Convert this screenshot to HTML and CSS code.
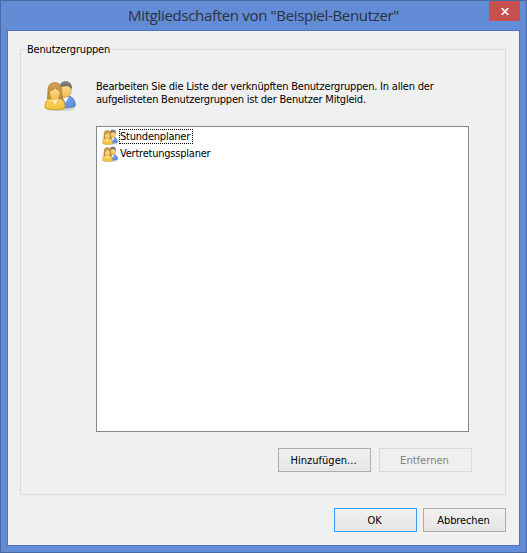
FILE: index.html
```html
<!DOCTYPE html>
<html lang="de">
<head>
<meta charset="utf-8">
<title>Mitgliedschaften</title>
<link rel="stylesheet" href="styles.css">
</head>
<body>
<svg class="defs" width="0" height="0" aria-hidden="true">
  <defs>
    <linearGradient id="gold" x1="0" y1="0" x2="0" y2="1"><stop offset="0" stop-color="#fbd361"/><stop offset="1" stop-color="#f3c23a"/></linearGradient>
    <linearGradient id="blue" x1="0" y1="0" x2="1" y2="1"><stop offset="0" stop-color="#85adef"/><stop offset="1" stop-color="#5585d8"/></linearGradient>
    <linearGradient id="hair" x1="0" y1="0" x2="0" y2="1"><stop offset="0" stop-color="#cf9d52"/><stop offset="1" stop-color="#bd8536"/></linearGradient>
    <linearGradient id="dark" x1="0" y1="0" x2="0" y2="1"><stop offset="0" stop-color="#8c8c8c"/><stop offset="1" stop-color="#5c5c5c"/></linearGradient>
    <linearGradient id="skin" x1="0" y1="0" x2="0" y2="1"><stop offset="0" stop-color="#ffe7a0"/><stop offset="1" stop-color="#efba4c"/></linearGradient>
    <symbol id="users" viewBox="0 1 32 30" preserveAspectRatio="none">
      <ellipse cx="17" cy="29.300" rx="14" ry="1.700" fill="#999" opacity=".3"/>
      <path d="M15 28V18.500c2-1.500 4-2 7-2 6 0 9.300 3 9.300 9.500C31 27.500 25 28 21 28Z" fill="url(#blue)" stroke="#4167a7" stroke-width=".7"/>
      <path d="m18.500 17 3 6 3.500-6Z" fill="#fff"/>
      <ellipse cx="21.500" cy="10.500" rx="5.700" ry="7.500" fill="url(#skin)" stroke="#b68434" stroke-width=".5"/>
      <path d="M15.500 8C16 .2 27.500-.2 28 8.500L27 10c-.5-2-1.500-3-4-3-3 0-5 0-7.500 2Z" fill="url(#dark)"/>
      <path d="M3 19C4.200 16 3.500 12 4 9c1-7.500 12.500-7.500 13.500 0 .5 3 0 7 1.500 10l-4 3H7Z" fill="url(#hair)" stroke="#a37331" stroke-width=".5"/>
      <path d="M1 28C1 21.500 3 20 6.500 19l4.500 1 4.500-1c4 1 5.500 3 5.500 9-2 2.500-17 2.500-20 0Z" fill="url(#gold)" stroke="#b98622" stroke-width=".7"/>
      <path d="m7.700 18.500 3.300 7 3.300-7Z" fill="#fff4d6"/>
      <ellipse cx="10.800" cy="13.500" rx="4.800" ry="7" fill="url(#skin)"/>
      <path d="M5.700 12c0-7 10.300-7 10.300 0-2-.3-3.700-1.300-4.700-3-1 1.700-3.300 2.700-5.600 3Z" fill="#cb9548"/>
    </symbol>
  </defs>
</svg>
<div class="window">
  <header class="titlebar">
    <h1 class="title">Mitgliedschaften von "Beispiel-Benutzer"</h1>
    <button class="close" aria-label="Schließen"><svg width="8" height="7" viewBox="0 0 8 7"><path d="M.7 0 7.300 7M7.300 0 .7 7" stroke="#fff" stroke-width="1.700"/></svg></button>
  </header>
  <main class="client">
    <section class="group">
      <h2 class="legend"><span>Benutzergruppen</span></h2>
      <div class="intro">
        <svg class="users-large"><use href="#users"/></svg>
        <p class="text"><span class="line-a">Bearbeiten Sie die Liste der verknüpften Benutzergruppen. In allen der</span><br><span class="line-b">aufgelisteten Benutzergruppen ist der Benutzer Mitgleid.</span></p>
      </div>
      <ul class="list">
        <li><svg class="users-small"><use href="#users"/></svg><span class="label focused">Stundenplaner</span></li>
        <li><svg class="users-small"><use href="#users"/></svg><span class="label">Vertretungssplaner</span></li>
      </ul>
      <div class="actions">
        <button class="btn wide add">Hinzufügen...</button>
        <button class="btn wide off" disabled>Entfernen</button>
      </div>
    </section>
    <footer class="footer">
      <button class="btn primary">OK</button>
      <button class="btn">Abbrechen</button>
    </footer>
  </main>
</div>
</body>
</html>
```
FILE: styles.css
```css
* { box-sizing: border-box; }
body { margin: 0; font: 11px/13px "DejaVu Sans Condensed", "DejaVu Sans", sans-serif; font-stretch: condensed; color: #000; letter-spacing: -0.2px; }
.defs { position: absolute; }
.window { width: 527px; height: 553px; padding: 0 6px 7px; border: 1px solid #4a6aa5; background: #628cd5; }
.titlebar { height: 29px; display: flex; align-items: flex-start; padding-left: 121px; }
.title { margin: 1px 0 0; width: 361px; font: 400 15px/26px "Open Sans", sans-serif; letter-spacing: -0.32px; color: #2b3140; white-space: nowrap; }
.close { width: 31px; height: 20px; padding: 0; border: 0; background: #c75050; display: flex; align-items: center; justify-content: center; }
.client { height: 516px; border: 1px solid #4f75b9; background: #f0f0f0; padding: 18px 13px 0 12px; }
.group { height: 446px; border: 1px solid #dcdcdc; }
.legend { margin: -7px 0 0 5px; height: 13px; font: inherit; }
.legend span { background: #f0f0f0; padding: 0 1px; }
.intro { display: flex; margin: 24px 0 0 23px; height: 46px; }
.users-large { width: 32px; height: 31px; }
.text { margin: 0 0 0 20px; white-space: nowrap; }
.line-b { letter-spacing: -0.22px; }
.list { list-style: none; margin: 0 0 0 75px; padding: 1px 0 0 5px; width: 373px; height: 306px; border: 1px solid #828790; background: #fff; }
.list li { display: flex; height: 17px; align-items: center; }
.users-small { width: 16px; height: 16px; }
.label { margin-left: 1px; padding-left: 1px; height: 15px; line-height: 16px; letter-spacing: -0.22px; white-space: nowrap; }
.focused { width: 74px; outline: 1px dotted #000; outline-offset: -1px; }
.actions { display: flex; gap: 8px; margin: 16px 0 0 257px; }
.btn { width: 83px; height: 24px; padding: 0 2px 0 0; border: 1px solid #acacac; background: linear-gradient(#f0f0f0, #e5e5e5); font: inherit; letter-spacing: -0.1px; color: #000; }
.wide { width: 93px; }
.add { letter-spacing: 0.03px; }
.off { border-color: #d9d9d9; background: #efefef; color: #838383; letter-spacing: 0.03px; }
.primary { border-color: #3399ff; }
.footer { display: flex; justify-content: flex-end; gap: 6px; margin-top: 13px; }
```
